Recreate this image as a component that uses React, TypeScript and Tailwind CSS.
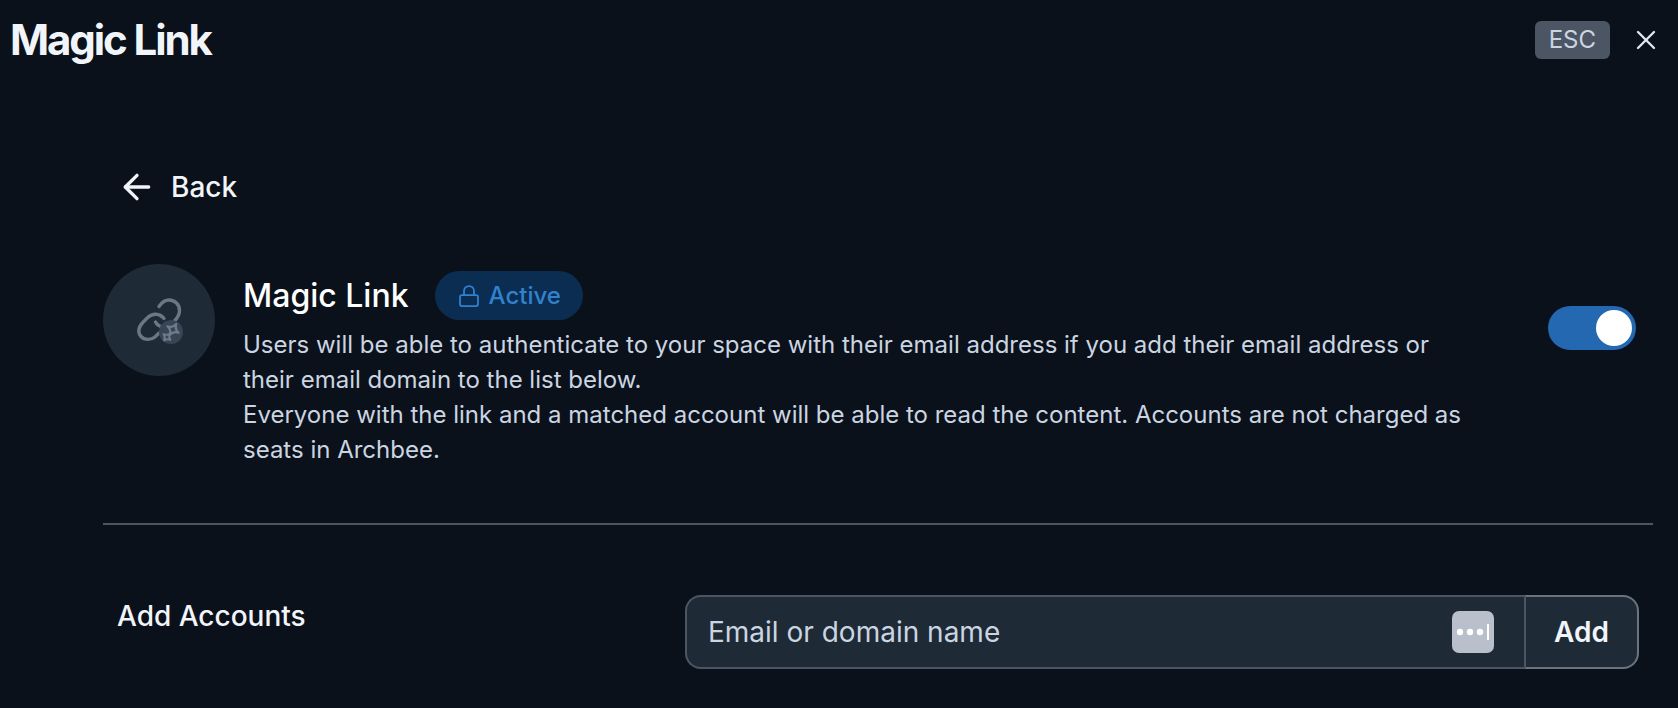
import { useState } from "react";
import { ArrowLeft, Lock, X } from "lucide-react";

const description = [
    "Users will be able to authenticate to your space with their email address if you add their email address or their email domain to the list below.",
    "Everyone with the link and a matched account will be able to read the content. Accounts are not charged as seats in Archbee.",
];

function MagicLinkIcon() {
    return (
        <svg viewBox="0 0 48 48" className="w-12 h-12" fill="none" aria-hidden="true">
            <g stroke="#6b7785" strokeWidth="3.4" strokeLinecap="round">
                <path d="M24 10.5C27 6 30 4 34 4c6 0 10.500 4.500 10.500 10.500 0 4-1.500 7-5.500 11" />
                <path d="M29 22.500c-4.500-5.500-11.500-5.500-16-1.200l-5 5C2.500 32 3 37.500 6 40.500c3.500 3.600 9.500 4 14 .5l4-4" />
                <path d="M20.500 26c1 2.200 2.800 3.600 5 4.500" />
            </g>
            <circle cx="36" cy="36" r="12" fill="#384554" />
            <g stroke="#6f7b89" strokeLinejoin="round">
                <path strokeWidth="2.2" transform="translate(38 33.5) rotate(30)" d="M0-6.500Q1-1 6.500 0 1 1 0 6.500-1 1-6.500 0-1-1 0-6.500z" />
                <path strokeWidth="2" transform="translate(32 41) rotate(40)" d="M0-4.500Q1-1 4.500 0 1 1 0 4.500-1 1-4.500 0-1-1 0-4.500z" />
            </g>
        </svg>
    );
}

function Header() {
    return (
        <header className="flex items-center justify-between pl-[10px] pr-3 h-20">
            <h1 className="text-[42px] leading-none font-bold tracking-tighter text-slate-100">Magic Link</h1>
            <div className="flex items-center gap-4">
                <kbd className="rounded-md bg-[#4b5563] px-[14px] text-2xl leading-[38px] font-[Inter] text-[#cbd5e1]">ESC</kbd>
                <button type="button" aria-label="Close" className="p-1 text-slate-200">
                    <X className="w-8 h-8" strokeWidth={1.75} />
                </button>
            </div>
        </header>
    );
}

function AddAccounts() {
    return (
        <form className="flex items-start pt-[70px] pl-[14px] pr-[14px]" onSubmit={(e) => e.preventDefault()}>
            <label htmlFor="account" className="w-[568px] text-[28px] leading-[42px] font-medium">Add Accounts</label>
            <div className="flex flex-1 h-[74px] rounded-2xl bg-[#1e2a36] text-[28px]">
                <div className="flex flex-1 items-center rounded-l-2xl border-2 border-r-0 border-[#4b5563] pl-[21px] pr-[30px]">
                    <input
                        id="account"
                        type="text"
                        placeholder="Email or domain name"
                        className="flex-1 min-w-0 bg-transparent outline-none placeholder:text-[#cbd5e1]"
                    />
                    <svg viewBox="0 0 42 42" className="w-[42px] h-[42px]" aria-hidden="true">
                        <rect width="42" height="42" rx="7" fill="#b9bfcb" />
                        <g fill="#fff">
                            <circle cx="8" cy="21" r="3.2" />
                            <circle cx="18" cy="21" r="3.2" />
                            <circle cx="28" cy="21" r="3.2" />
                            <rect x="35" y="13" width="2" height="16" />
                        </g>
                    </svg>
                </div>
                <button type="submit" className="w-[115px] rounded-r-2xl border-2 border-[#6b7280] border-l-[#4b5563] font-semibold text-slate-100">
                    Add
                </button>
            </div>
        </form>
    );
}

export default function App() {
    const [enabled, setEnabled] = useState(true);

    return (
        <div className="min-h-screen bg-[#0a111b] font-[Inter,sans-serif] text-slate-100">
            <Header />

            <main className="pt-[84px] pl-[103px] pr-[25px]">
                <button type="button" className="flex items-center gap-[14px] pl-[14px] text-[28px] leading-[46px] font-medium">
                    <ArrowLeft className="w-10 h-10" />
                    Back
                </button>

                <section className="flex items-start pt-[54px] pb-14 border-b-2 border-[#4b5563]">
                    <div className="flex items-center justify-center shrink-0 w-28 h-28 rounded-full bg-[#1e2a36]">
                        <MagicLinkIcon />
                    </div>

                    <div className="flex-1 pt-[7px] pl-7 pr-[72px]">
                        <div className="flex items-center gap-[26px]">
                            <h2 className="text-[32px] leading-none font-medium text-white">Magic Link</h2>
                            <span className="flex items-center gap-2 rounded-full bg-[#0c2d52] px-[22px] text-2xl leading-[49px] font-medium text-[#3182ce]">
                                <Lock className="w-6 h-6" strokeWidth={1.75} />
                                Active
                            </span>
                        </div>
                        <div className="pt-[7px] text-2xl leading-[35px] text-[#cbd5e1]">
                            {description.map((text) => (
                                <p key={text}>{text}</p>
                            ))}
                        </div>
                    </div>

                    <button
                        type="button"
                        role="switch"
                        aria-checked={enabled}
                        aria-label="Magic Link"
                        onClick={() => setEnabled(!enabled)}
                        className={`flex items-center shrink-0 w-[88px] h-11 mt-[42px] mr-[17px] p-1 rounded-full ${enabled ? "justify-end bg-[#2368b0]" : "justify-start bg-[#4b5563]"}`}
                    >
                        <span className="w-9 h-9 rounded-full bg-white" />
                    </button>
                </section>

                <AddAccounts />
            </main>
        </div>
    );
}
